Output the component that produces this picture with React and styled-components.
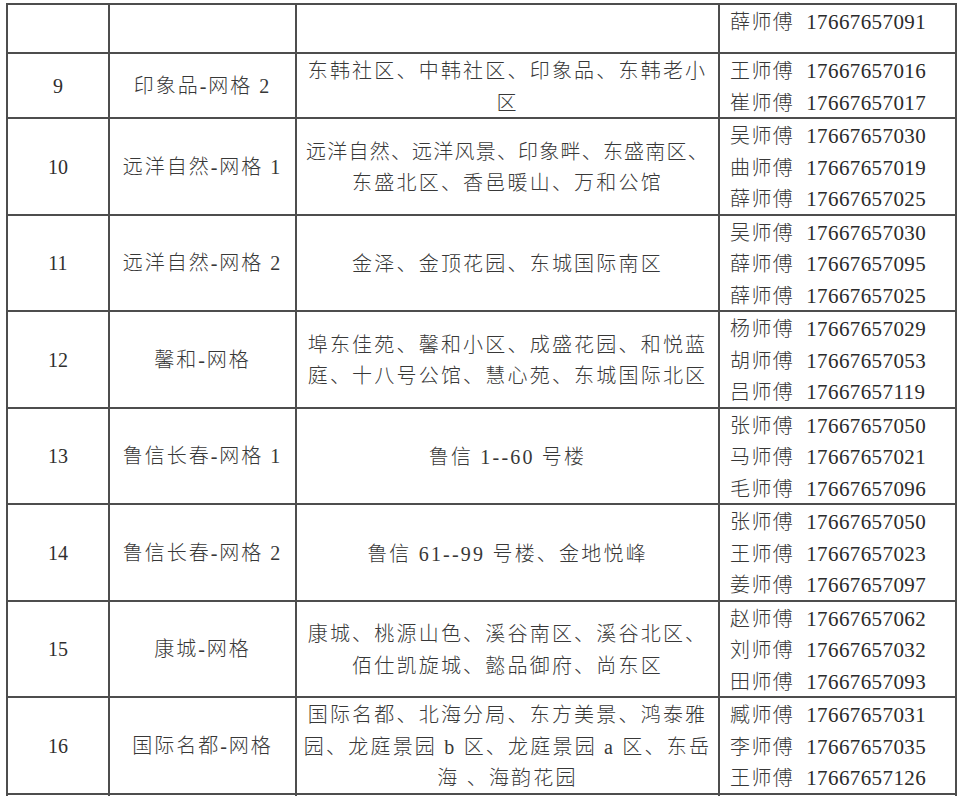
import React from "react";
import styled, { createGlobalStyle } from "styled-components";

const Global = createGlobalStyle`
  html, body { margin: 0; padding: 0; background: #fff; overflow: hidden; }
  body { font-family: "Liberation Serif", "Noto Sans CJK SC", serif; color: #333; }
`;

const Page = styled.div`
  padding: 3px 0 0 6px;
  width: 960px;
  height: 796px;
  box-sizing: border-box;
  overflow: hidden;
`;

const Table = styled.table`
  border-collapse: collapse;
  table-layout: fixed;
  width: 949px;
`;

const Row = styled.tr`
  height: ${(p) => (p.$h ? `${p.$h}px` : "auto")};
`;

const Cell = styled.td`
  border: 2px solid #4d4d4d;
  padding: 0;
  vertical-align: ${(p) => (p.$top ? "top" : "middle")};
  text-align: ${(p) => (p.$left ? "left" : "center")};
  line-height: 31.5px;
  color: #383838;
`;

const NoCell = styled(Cell)`
  font-size: 20px;
  color: #2f2f2f;
  padding-top: 2px;
`;

const NameCell = styled(Cell)`
  font-size: 20px;
  letter-spacing: 2px;
  font-weight: 300;
  padding-top: 2px;
`;

const AreaCell = styled(Cell)`
  font-size: 20px;
  font-weight: 300;
`;

const StaffCell = styled(Cell)`
  padding-left: 10px;
`;

const Line = styled.div`
  box-sizing: border-box;
  height: 31.5px;
  padding-top: 4px;
  line-height: 27.5px;
  white-space: nowrap;
  overflow: visible;
`;

const AreaLine = styled(Line)`
  letter-spacing: ${(p) => (p.$squeeze ? "1.2px" : "2.2px")};
`;

const StaffLine = styled(Line)``;

const StaffName = styled.span`
  font-size: 20px;
  letter-spacing: 1.4px;
  font-weight: 300;
`;

const Phone = styled.span`
  font-size: 21px;
  letter-spacing: 0.4px;
  margin-left: 12px;
  color: #2b2b2b;
`;

const rows = [
  {
    no: "9",
    name: "印象品-网格 2",
    area: [["东韩社区、中韩社区、印象品、东韩老小"], ["区"]],
    staff: [["王师傅", "17667657016"], ["崔师傅", "17667657017"]],
  },
  {
    no: "10",
    name: "远洋自然-网格 1",
    area: [["远洋自然、远洋风景、印象畔、东盛南区、", true], ["东盛北区、香邑暖山、万和公馆"]],
    staff: [["吴师傅", "17667657030"], ["曲师傅", "17667657019"], ["薛师傅", "17667657025"]],
  },
  {
    no: "11",
    name: "远洋自然-网格 2",
    area: [["金泽、金顶花园、东城国际南区"]],
    staff: [["吴师傅", "17667657030"], ["薛师傅", "17667657095"], ["薛师傅", "17667657025"]],
  },
  {
    no: "12",
    name: "馨和-网格",
    area: [["埠东佳苑、馨和小区、成盛花园、和悦蓝"], ["庭、十八号公馆、慧心苑、东城国际北区"]],
    staff: [["杨师傅", "17667657029"], ["胡师傅", "17667657053"], ["吕师傅", "17667657119"]],
  },
  {
    no: "13",
    name: "鲁信长春-网格 1",
    area: [["鲁信 1--60 号楼"]],
    staff: [["张师傅", "17667657050"], ["马师傅", "17667657021"], ["毛师傅", "17667657096"]],
  },
  {
    no: "14",
    name: "鲁信长春-网格 2",
    area: [["鲁信 61--99 号楼、金地悦峰"]],
    staff: [["张师傅", "17667657050"], ["王师傅", "17667657023"], ["姜师傅", "17667657097"]],
  },
  {
    no: "15",
    name: "康城-网格",
    area: [["康城、桃源山色、溪谷南区、溪谷北区、"], ["佰仕凯旋城、懿品御府、尚东区"]],
    staff: [["赵师傅", "17667657062"], ["刘师傅", "17667657032"], ["田师傅", "17667657093"]],
  },
  {
    no: "16",
    name: "国际名都-网格",
    area: [["国际名都、北海分局、东方美景、鸿泰雅"], ["园、龙庭景园 b 区、龙庭景园 a 区、东岳"], ["海 、海韵花园"]],
    staff: [["臧师傅", "17667657031"], ["李师傅", "17667657035"], ["王师傅", "17667657126"]],
  },
];

function Staff({ name, phone }) {
  return (
    <StaffLine>
      <StaffName>{name}</StaffName>
      <Phone>{phone}</Phone>
    </StaffLine>
  );
}

export default function App() {
  return (
    <Page>
      <Global />
      <Table>
        <colgroup>
          <col style={{ width: 102 }} />
          <col style={{ width: 187 }} />
          <col style={{ width: 423 }} />
          <col style={{ width: 237 }} />
        </colgroup>
        <tbody>
          <Row $h={49}>
            <NoCell />
            <NameCell />
            <AreaCell />
            <StaffCell $left $top>
              <Staff name="薛师傅" phone="17667657091" />
            </StaffCell>
          </Row>
          {rows.map((r) => (
            <Row key={r.no}>
              <NoCell>{r.no}</NoCell>
              <NameCell>{r.name}</NameCell>
              <AreaCell>
                {r.area.map(([t, sq], i) => (
                  <AreaLine key={i} $squeeze={sq}>
                    {t}
                  </AreaLine>
                ))}
              </AreaCell>
              <StaffCell $left>
                {r.staff.map(([n, p], i) => (
                  <Staff key={i} name={n} phone={p} />
                ))}
              </StaffCell>
            </Row>
          ))}
          <Row $h={30}>
            <NoCell />
            <NameCell />
            <AreaCell />
            <StaffCell $left />
          </Row>
        </tbody>
      </Table>
    </Page>
  );
}
